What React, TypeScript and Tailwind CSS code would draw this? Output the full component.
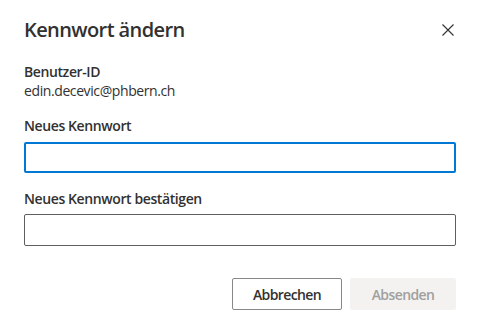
const font = { fontFamily: '"Open Sans", "Noto Sans", sans-serif' };

export default function App() {
  return (
    <div className="w-[480px] h-[333px] bg-white text-[#323130]" style={font}>
      <div className="px-6 pt-[17px]">
        <div className="flex items-center justify-between h-[26px]">
          <h1 className="text-[20px] font-semibold leading-[26px] tracking-[-0.6px]">Kennwort ändern</h1>
          <button className="w-5 h-5 flex items-center justify-center mr-[-2px]">
            <svg width="12" height="12" viewBox="0 0 12 12" fill="none" stroke="#323130" strokeWidth="1.1">
              <path d="M0.5 0.5 L11.5 11.5 M11.5 0.5 L0.5 11.5" />
            </svg>
          </button>
        </div>

        <div className="mt-[19px] tracking-[-0.4px]">
          <p className="text-[14px] font-semibold leading-[20px]">Benutzer-ID</p>
          <p className="text-[14px] leading-[18px]">edin.decevic@phbern.ch</p>
        </div>

        <div className="mt-[16px]">
          <label className="block text-[14px] font-semibold leading-[20px] tracking-[-0.4px]">Neues Kennwort</label>
          <input
            type="password"
            className="mt-[6px] block w-full h-[31px] border-2 border-[#0078d4] rounded-[2px] outline-none"
          />
        </div>

        <div className="mt-[16px]">
          <label className="block text-[14px] font-semibold leading-[20px] tracking-[-0.4px]">
            Neues Kennwort bestätigen
          </label>
          <input
            type="password"
            className="mt-[5px] block w-full h-[32px] border border-[#605e5c] rounded-[2px] outline-none"
          />
        </div>

        <div className="flex justify-end gap-2 mt-[32px] tracking-[-0.6px]">
          <button className="w-[110px] h-[32px] border border-[#8a8886] rounded-[2px] text-[14px] font-semibold text-[#323130]">
            Abbrechen
          </button>
          <button className="w-[106px] h-[32px] bg-[#f3f2f1] rounded-[2px] text-[14px] font-semibold text-[#a19f9d]">
            Absenden
          </button>
        </div>
      </div>
    </div>
  );
}
